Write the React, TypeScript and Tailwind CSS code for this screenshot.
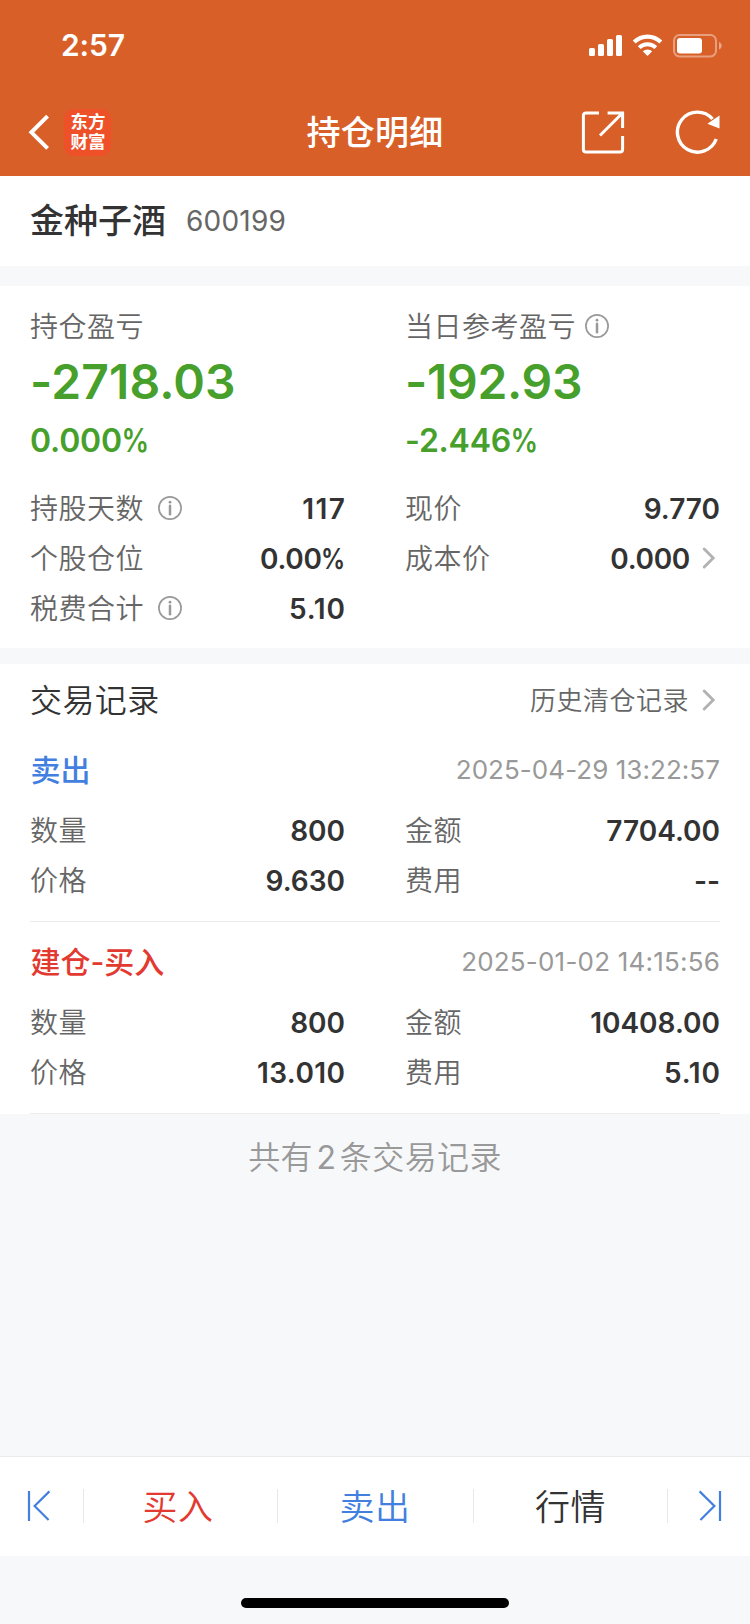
import type { ReactNode } from 'react';

function InfoIcon({ className = '' }: { className?: string }) {
  return (
    <svg className={className} width="24" height="24" viewBox="0 0 24 24" fill="none">
      <circle cx="12" cy="12" r="11.1" stroke="#999" strokeWidth="1.7" />
      <circle cx="12" cy="6.2" r="1.4" fill="#999" />
      <path d="M12 9.8V18.2" stroke="#999" strokeWidth="2.5" strokeLinecap="round" />
    </svg>
  );
}

function Chevron() {
  return (
    <svg width="14" height="24" viewBox="0 0 14 24" fill="none">
      <path d="M2.2 3L11.2 12L2.2 21" stroke="#b2b2b2" strokeWidth="2.9" strokeLinecap="round" />
    </svg>
  );
}

function StatusBar() {
  return (
    <div className="flex h-[88px] items-center justify-between pl-[61px] pr-[28px]">
      <span className="pt-[2px] text-[30px] font-semibold leading-[40px] tracking-[-0.1px]">2:57</span>
      <svg width="134" height="24" viewBox="0 0 134 24" fill="none" className="mt-[3px]">
        <g fill="#fff">
          <rect x="1" y="14" width="6" height="8" rx="1.6" />
          <rect x="10" y="10" width="6" height="12" rx="1.6" />
          <rect x="19" y="5" width="6" height="17" rx="1.6" />
          <rect x="28" y="1" width="6" height="21" rx="1.6" />
          <path d="M59.5 22L54.8 17.3A6.8 6.8 0 0 1 64.2 17.3Z" />
        </g>
        <path d="M51.2 13.6A11.8 11.8 0 0 1 67.8 13.6" stroke="#fff" strokeWidth="4" />
        <path d="M46.2 8A19 19 0 0 1 72.8 8" stroke="#fff" strokeWidth="4.2" />
        <rect x="86" y="1" width="42" height="21.4" rx="5.5" stroke="#fff" strokeOpacity=".4" strokeWidth="2" />
        <rect x="89" y="4" width="25" height="15.4" rx="3" fill="#fff" />
        <path d="M131 8C134.6 9.5 134.6 14 131 15.6Z" fill="#fff" fillOpacity=".45" />
      </svg>
    </div>
  );
}

function NavBar() {
  return (
    <div className="grid h-[88px] grid-cols-[1fr_auto_1fr] items-center pl-[28px] pr-[29px]">
      <div className="flex items-center gap-[14px]">
        <svg width="22" height="36" viewBox="0 0 22 36" fill="none">
          <path d="M19.6 2.2L3.4 18.3L19.6 34.4" stroke="#fff" strokeWidth="4" />
        </svg>
        <div className="flex h-[47px] w-[47px] flex-col items-center justify-center rounded-[10px] bg-[#ee5028] pl-px text-[17.5px] font-bold leading-[20px]">
          <span>东方</span>
          <span>财富</span>
        </div>
      </div>
      <h1 className="pl-px pt-[2px] text-[34px] font-medium leading-[44px] tracking-[0.3px]">持仓明细</h1>
      <div className="flex items-center justify-end gap-[50px]">
        <svg width="44" height="44" viewBox="0 0 44 44" fill="none" stroke="#fff" strokeWidth="3" className="mt-px">
          <path d="M18 1.9H5a2.6 2.6 0 0 0-2.6 2.6V38.5A2.6 2.6 0 0 0 5 41.1H39A2.6 2.6 0 0 0 41.6 38.5V25" />
          <path d="M26.6 1.9H41.6V17M41 2.5L19 24.5" />
        </svg>
        <svg width="46" height="44" viewBox="0 0 46 44" fill="none">
          <path d="M41.2 29A20 20 0 1 1 37.5 9" stroke="#fff" strokeWidth="3.4" />
          <path d="M44.5 5.4V18.4L32.4 13.8Z" fill="#fff" />
        </svg>
      </div>
    </div>
  );
}

/** A number; a trailing percent sign is drawn condensed. */
function Amount({ value }: { value: string }) {
  if (!value.endsWith('%')) return <>{value}</>;
  return (
    <>
      {value.slice(0, -1)}
      <span className="-ml-[0.16em] inline-block origin-right scale-x-[0.86]">%</span>
    </>
  );
}

type RowProps = { label: string; value: string; info?: boolean; arrow?: boolean; spacing?: string };

function Row({ label, value, info, arrow, spacing = '' }: RowProps) {
  return (
    <div className="flex h-[50px] items-center">
      <span className="pt-[2px] text-[28px] font-[350] leading-[40px] tracking-[0.5px] text-[#666]">{label}</span>
      {info && <InfoIcon className="ml-[14px]" />}
      <span className={`ml-auto pt-px text-[28px] font-semibold leading-[40px] text-[#333] ${spacing}`}>
        <Amount value={value} />
      </span>
      {arrow && (
        <span className="ml-[12px] mr-[4px]">
          <Chevron />
        </span>
      )}
    </div>
  );
}

type ProfitProps = { label: string; amount: string; percent: string; info?: boolean; spacing: string };

function Profit({ label, amount, percent, info, spacing }: ProfitProps) {
  return (
    <div className="flex flex-col">
      <div className="flex h-[40px] items-center">
        <span className="pt-[2px] text-[28px] font-[350] leading-[40px] tracking-[0.5px] text-[#666]">{label}</span>
        {info && <InfoIcon className="ml-[9px]" />}
      </div>
      <span className={`mt-[6px] text-[48px] font-semibold leading-[60px] text-[#46a02b] ${spacing}`}>{amount}</span>
      <span className="mt-[9px] text-[32px] font-semibold leading-[40px] tracking-[-0.2px] text-[#46a02b]">
        <Amount value={percent} />
      </span>
    </div>
  );
}

type Trade = {
  title: string;
  color: string;
  time: string;
  timeSpacing: string;
  qty: string;
  amount: string;
  price: string;
  fee: string;
  feeSpacing?: string;
  priceSpacing?: string;
};

const trades: Trade[] = [
  {
    title: '卖出',
    color: 'text-[#427fdf]',
    time: '2025-04-29 13:22:57',
    timeSpacing: 'tracking-[0.05px]',
    qty: '800',
    amount: '7704.00',
    price: '9.630',
    fee: '--',
  },
  {
    title: '建仓-买入',
    color: 'text-[#e23a31]',
    time: '2025-01-02 14:15:56',
    timeSpacing: 'tracking-[0.2px]',
    qty: '800',
    amount: '10408.00',
    price: '13.010',
    fee: '5.10',
    priceSpacing: 'tracking-[0.4px] -mr-[0.4px]',
    feeSpacing: 'tracking-[0.8px] -mr-[0.8px]',
  },
];

function TradeItem({ trade }: { trade: Trade }) {
  return (
    <div className="mx-[30px] h-[192px] border-b border-[#ebebeb] pt-[16px]">
      <div className="flex h-[48px] items-center justify-between">
        <span className={`pl-[0.5px] text-[30px] font-medium leading-[48px] ${trade.color}`}>{trade.title}</span>
        <span className={`text-[26px] leading-[48px] text-[#999] ${trade.timeSpacing}`}>{trade.time}</span>
      </div>
      <div className="mt-[11px] grid grid-cols-2 gap-x-[60px]">
        <Row label="数量" value={trade.qty} />
        <Row label="金额" value={trade.amount} />
        <Row label="价格" value={trade.price} spacing={trade.priceSpacing} />
        <Row label="费用" value={trade.fee} spacing={trade.feeSpacing} />
      </div>
    </div>
  );
}

function Action({ className, children }: { className: string; children: ReactNode }) {
  return (
    <button className={`h-full pt-px text-[35px] font-[350] leading-[48px] tracking-[0.5px] ${className}`}>
      {children}
    </button>
  );
}

function Divider() {
  return <span className="h-[34px] w-px bg-[#e8e8e8]" />;
}

export default function App() {
  return (
    <div className="flex h-[1624px] w-[750px] flex-col bg-[#f7f8fa] font-['Inter','Noto_Sans_CJK_SC',sans-serif]">
      <header className="h-[176px] bg-[#d86028] text-white">
        <StatusBar />
        <NavBar />
      </header>

      <section className="flex h-[90px] items-center bg-white px-[30px]">
        <span className="text-[34px] font-medium leading-[44px] text-[#333]">金种子酒</span>
        <span className="ml-[20px] text-[28px] leading-[44px] tracking-[0.2px] text-[#666]">600199</span>
      </section>

      <section className="mt-[20px] h-[362px] bg-white px-[30px] pt-[20px]">
        <div className="grid grid-cols-2 gap-x-[60px]">
          <Profit label="持仓盈亏" amount="-2718.03" percent="0.000%" spacing="tracking-[0.1px]" />
          <Profit label="当日参考盈亏" amount="-192.93" percent="-2.446%" spacing="tracking-[-0.3px]" info />
        </div>
        <div className="mt-[22px] grid grid-cols-2 gap-x-[60px]">
          <Row label="持股天数" value="117" spacing="tracking-[1.4px] -mr-[1.2px]" info />
          <Row label="现价" value="9.770" />
          <Row label="个股仓位" value="0.00%" spacing="tracking-[-0.3px]" />
          <Row label="成本价" value="0.000" spacing="tracking-[-0.3px]" arrow />
          <Row label="税费合计" value="5.10" spacing="tracking-[0.8px] -mr-[0.8px]" info />
        </div>
      </section>

      <section className="mt-[16px] h-[450px] bg-white">
        <div className="flex h-[66px] items-center px-[30px] pt-[6px]">
          <h2 className="pt-[2px] text-[32px] font-[350] leading-[44px] tracking-[0.4px] text-[#333]">交易记录</h2>
          <span className="ml-auto pt-[2px] text-[26px] font-[350] leading-[44px] tracking-[0.5px] text-[#666]">
            历史清仓记录
          </span>
          <span className="ml-[13px] mr-[4px]">
            <Chevron />
          </span>
        </div>
        {trades.map((t) => (
          <TradeItem key={t.time} trade={t} />
        ))}
      </section>

      <p className="mt-[21px] text-center text-[32px] font-[350] leading-[46px] tracking-[0.4px] text-[#999]">
        共有<span className="mx-[3.5px] font-normal">2</span>条交易记录
      </p>

      <nav className="mt-auto grid h-[100px] grid-cols-[83px_1px_193px_1px_195px_1px_193px_1px_82px] items-center border-t border-[#ebebeb] bg-white pb-px">
        <span className="flex pl-[27px]">
          <svg width="24" height="32" viewBox="0 0 24 32" fill="none" stroke="#427fdf" strokeWidth="2.2">
            <path d="M2 1V31M22.4 1.4L7.6 16L21.6 30" />
          </svg>
        </span>
        <Divider />
        <Action className="pr-[5px] text-[#e23a31]">买入</Action>
        <Divider />
        <Action className="pr-px text-[#427fdf]">卖出</Action>
        <Divider />
        <Action className="text-[#333]">行情</Action>
        <Divider />
        <span className="flex justify-end pr-[28px]">
          <svg width="24" height="32" viewBox="0 0 24 32" fill="none" stroke="#427fdf" strokeWidth="2.2">
            <path d="M22 1V31M1.6 1.4L16.4 16L2.4 30" />
          </svg>
        </span>
      </nav>
      <div className="flex h-[68px] justify-center pt-[42px]">
        <span className="h-[10px] w-[268px] rounded-full bg-black" />
      </div>
    </div>
  );
}
